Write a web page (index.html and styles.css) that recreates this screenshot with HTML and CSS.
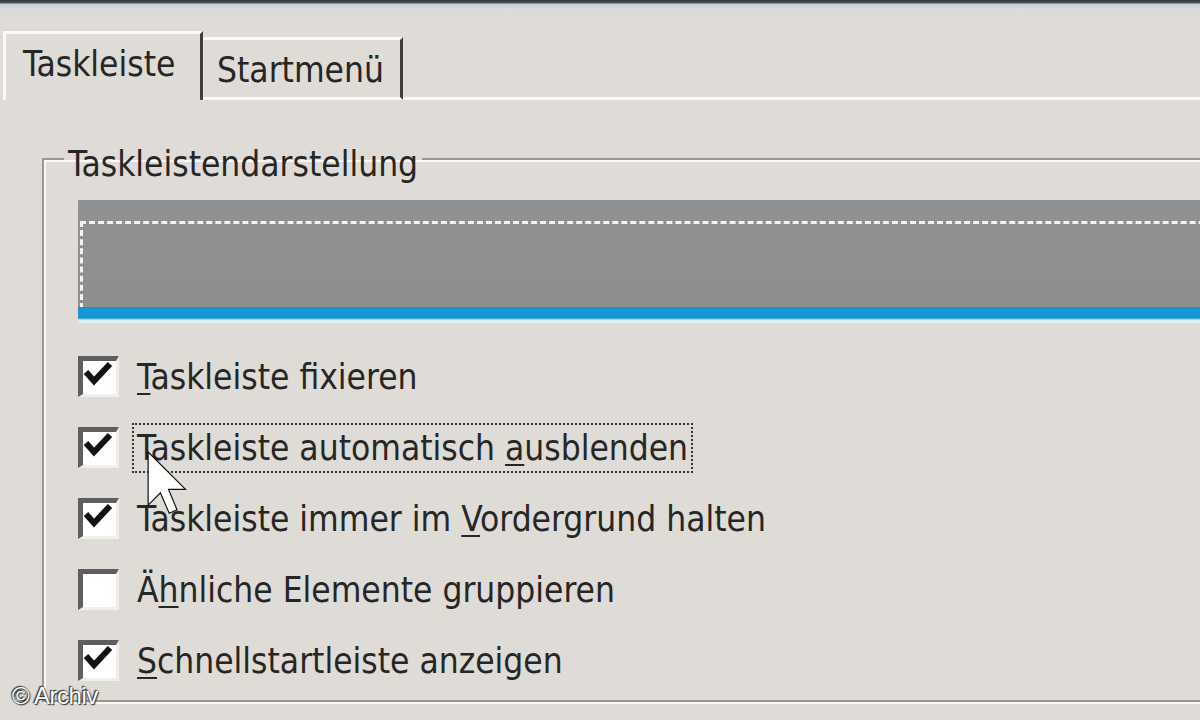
FILE: index.html
```html
<!DOCTYPE html>
<html lang="de">
<head>
<meta charset="utf-8">
<title>Taskleiste</title>
<link rel="stylesheet" href="styles.css">
</head>
<body>
<div class="window">
  <div class="topbar"></div>
  <div class="tabstrip">
    <div class="tab active">Taskleiste</div>
    <div class="tab">Startmenü</div>
    <div class="tabfill"></div>
  </div>
  <div class="panel">
    <fieldset class="group">
      <legend class="legend">Taskleistendarstellung</legend>
      <div class="preview">
        <div class="preview-dash"></div>
        <div class="preview-bar"></div>
      </div>
      <ul class="options">
        <li class="option">
          <span class="box"><svg viewBox="0 0 40 40" class="check"><path d="M8 16 L16 25 L32 8"/></svg></span>
          <span class="label"><u>T</u>askleiste fixieren</span>
        </li>
        <li class="option">
          <span class="box"><svg viewBox="0 0 40 40" class="check"><path d="M8 16 L16 25 L32 8"/></svg></span>
          <span class="label focus">Taskleiste automatisch <u>a</u>usblenden</span>
        </li>
        <li class="option">
          <span class="box"><svg viewBox="0 0 40 40" class="check"><path d="M8 16 L16 25 L32 8"/></svg></span>
          <span class="label">Taskleiste immer im <u>V</u>ordergrund halten</span>
        </li>
        <li class="option">
          <span class="box"></span>
          <span class="label">Ä<u>h</u>nliche Elemente gruppieren</span>
        </li>
        <li class="option">
          <span class="box"><svg viewBox="0 0 40 40" class="check"><path d="M8 16 L16 25 L32 8"/></svg></span>
          <span class="label"><u>S</u>chnellstartleiste anzeigen</span>
        </li>
      </ul>
    </fieldset>
  </div>
  <svg class="cursor" viewBox="0 0 12 20"><path d="M0.6 0.6 L0.6 16.2 L4.2 12.6 L6.8 18.6 L9.1 17.6 L6.6 11.6 L11.6 11.6 Z"/></svg>
  <div class="watermark">© Archiv</div>
</div>
</body>
</html>
```
FILE: styles.css
```css
html, body {
  margin: 0;
  padding: 0;
}
body {
  background: #dfdbd6;
  overflow: hidden;
}
.window {
  position: relative;
  width: 1200px;
  height: 720px;
  overflow: hidden;
  background: #dfdbd6;
  font-family: "DejaVu Sans Condensed", "DejaVu Sans", sans-serif;
  font-size: 35px;
  color: #262626;
}
.topbar {
  height: 16px;
  background: linear-gradient(to bottom, #2e3640 0px, #4a5560 3px, #c6d0d6 4px, #d8dcdc 9px, #dfdbd6 16px);
}
.tabstrip {
  display: flex;
  align-items: flex-end;
  height: 84px;
  padding-left: 3px;
}
.tab {
  box-sizing: border-box;
  width: 200px;
  height: 63px;
  border-top: 3px solid #fbfaf8;
  border-left: 1px solid #eceae6;
  border-right: 3px solid #3e3e3e;
  border-bottom: 3px solid #fbfaf8;
  padding: 12px 0 0 13px;
  line-height: 36px;
}
.tab.active {
  height: 69px;
  border-left: 3px solid #fbfaf8;
  border-bottom: none;
  padding: 12px 0 0 17px;
}
.tabfill {
  flex: 1;
  border-bottom: 3px solid #fbfaf8;
}
.panel {
  padding-left: 42px;
  padding-top: 39px;
}
.group {
  box-sizing: border-box;
  width: 1300px;
  margin: 0;
  padding: 0 0 4px 0;
  border: 2px solid #9a9691;
  box-shadow: inset 2px 2px 0 #fbfaf8, 2px 2px 0 #fbfaf8;
}
.legend {
  margin-left: 20px;
  padding: 10px 4px 0 4px;
  line-height: 30px;
}
.preview {
  position: relative;
  margin: 21px 0 0 34px;
  height: 123px;
  background: linear-gradient(to bottom, #8f9193, #8c8e90);
}
.preview-dash {
  position: absolute;
  left: 2px;
  top: 21px;
  right: 0;
  bottom: 14px;
  border-top: 3px dashed #f2f2f2;
  border-left: 3px dashed #f2f2f2;
}
.preview-bar {
  position: absolute;
  left: 0;
  right: 0;
  bottom: 0;
  height: 16px;
  background: linear-gradient(to bottom, #1d8fc4 0px, #119ad8 3px, #1496d4 11px, #cdf2f8 13px, #dff4f4 16px);
}
.options {
  list-style: none;
  margin: 18px 0 0 34px;
  padding: 0;
}
.option {
  display: flex;
  align-items: center;
  height: 71px;
}
.box {
  box-sizing: border-box;
  flex: none;
  width: 41px;
  height: 41px;
  background: #ffffff;
  border-top: 5px solid #5e5e5e;
  border-left: 5px solid #5e5e5e;
  border-right: 3px solid #f1efec;
  border-bottom: 3px solid #f1efec;
  margin-right: 16px;
  position: relative;
}
.check {
  position: absolute;
  left: -5px;
  top: -5px;
  width: 40px;
  height: 40px;
}
.check path {
  fill: none;
  stroke: #111;
  stroke-width: 6;
  stroke-linejoin: miter;
  stroke-linecap: butt;
}
.label {
  white-space: nowrap;
  line-height: 44px;
  padding: 0 2px;
}
.label u {
  text-decoration-thickness: 2px;
  text-underline-offset: 4px;
}
.focus {
  outline: 2px dotted #333;
  outline-offset: 1px;
}
.cursor {
  position: absolute;
  left: 146px;
  top: 450px;
  width: 41px;
  height: 68px;
}
.cursor path {
  fill: #fff;
  stroke: #111;
  stroke-width: 0.35;
  stroke-linejoin: miter;
}
.watermark {
  position: absolute;
  left: 12px;
  top: 682px;
  font-family: "Liberation Sans", Arial, sans-serif;
  font-size: 24px;
  color: #fff;
  text-shadow: 0 0 2px #333, 1px 1px 1px #333, -1px -1px 1px #333;
  letter-spacing: -0.5px;
}
```
